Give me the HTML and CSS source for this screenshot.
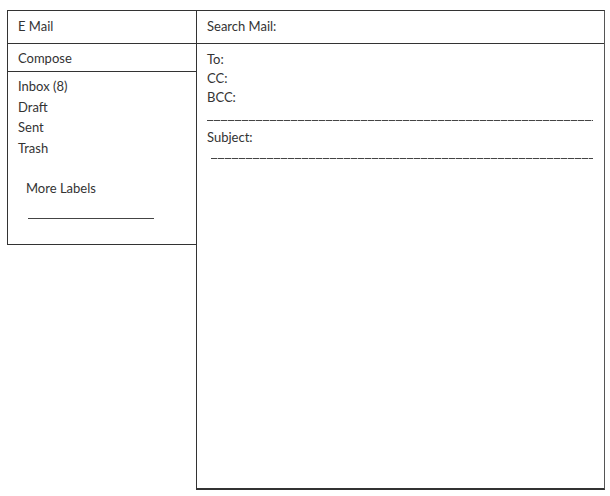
FILE: index.html
```html
<!DOCTYPE html>
<html lang="en">
<head>
    <meta charset="UTF-8">
    <title>E Mail</title>
    <link rel="stylesheet" href="styles.css">
</head>
<body>
    <div class="page">
        <aside class="sidebar">
            <div class="cell head">E Mail</div>
            <div class="cell compose">Compose</div>
            <ul class="labels">
                <li>Inbox (8)</li>
                <li>Draft</li>
                <li>Sent</li>
                <li>Trash</li>
            </ul>
            <div class="more">More Labels</div>
            <div class="more-line"></div>
        </aside>

        <main class="mail">
            <div class="cell head">Search Mail:</div>
            <div class="fields">
                <div class="field">To:</div>
                <div class="field">CC:</div>
                <div class="field">BCC:</div>
                <div class="dashes"></div>
                <div class="field subject">Subject:</div>
                <div class="dashes indent"></div>
            </div>
        </main>
    </div>
</body>
</html>
```

FILE: styles.css
```css
* {
    margin: 0;
    padding: 0;
    box-sizing: border-box;
}

body {
    font-family: Lato, "Open Sans", sans-serif;
    font-size: 13px;
    color: #333;
    background: #fff;
}

.page {
    display: flex;
    align-items: flex-start;
    padding: 10px 0 0 7px;
}

.sidebar {
    width: 190px;
    height: 235px;
    border: 1px solid #333;
}

.mail {
    width: 409px;
    height: 480px;
    margin-left: -1px;
    border: 1px solid #333;
    border-bottom-width: 2px;
    border-right-color: #555;
}

.cell {
    padding-left: 10px;
    border-bottom: 1px solid #333;
}

.head {
    height: 33px;
    line-height: 31px;
}

.compose {
    height: 28px;
    line-height: 28px;
}

.labels {
    list-style: none;
    padding: 4px 0 0 10px;
}

.labels li {
    height: 20.5px;
    line-height: 20px;
}

.more {
    padding: 20px 0 0 18px;
    line-height: 20px;
}

.more-line {
    width: 126px;
    margin: 20px 0 0 20px;
    border-top: 1px solid #444;
}

.fields {
    padding: 6px 0 0 10px;
}

.field {
    height: 19px;
    line-height: 19px;
}

.subject {
    margin-top: 7px;
}

/* dashed rule drawn as a row of short dashes */
.dashes {
    width: 386px;
    height: 1px;
    margin-top: 13px;
    background: repeating-linear-gradient(to right, #444 0 6px, #bbb 6px 7px);
}

.dashes.indent {
    margin: 11px 0 0 4px;
    width: 382px;
}
```
